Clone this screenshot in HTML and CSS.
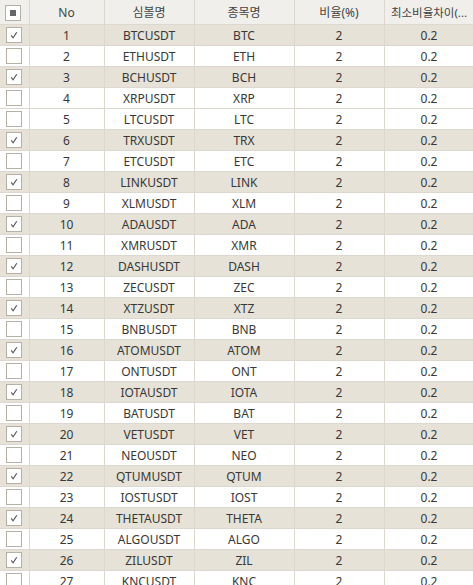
FILE: index.html
```html
<!DOCTYPE html>
<html lang="ko">
<head>
    <meta charset="UTF-8">
    <title>종목 목록</title>
    <link rel="stylesheet" href="styles.css">
</head>
<body>
<table class="grid">
    <colgroup>
        <col class="c-chk">
        <col class="c-no">
        <col class="c-sym">
        <col class="c-name">
        <col class="c-rate">
        <col class="c-min">
    </colgroup>
    <thead>
        <tr>
            <th><span class="box"><span class="mixed"></span></span></th>
            <th>No</th>
            <th>심볼명</th>
            <th>종목명</th>
            <th>비율(%)</th>
            <th class="clip">최소비율차이(...</th>
        </tr>
    </thead>
    <tbody>
        <tr class="on"><td><span class="box"><svg viewBox="0 0 15 15"><path d="M4.5 8 L6.5 10.5 L10.5 4.5"/></svg></span></td><td>1</td><td>BTCUSDT</td><td>BTC</td><td>2</td><td>0.2</td></tr>
        <tr><td><span class="box"></span></td><td>2</td><td>ETHUSDT</td><td>ETH</td><td>2</td><td>0.2</td></tr>
        <tr class="on"><td><span class="box"><svg viewBox="0 0 15 15"><path d="M4.5 8 L6.5 10.5 L10.5 4.5"/></svg></span></td><td>3</td><td>BCHUSDT</td><td>BCH</td><td>2</td><td>0.2</td></tr>
        <tr><td><span class="box"></span></td><td>4</td><td>XRPUSDT</td><td>XRP</td><td>2</td><td>0.2</td></tr>
        <tr><td><span class="box"></span></td><td>5</td><td>LTCUSDT</td><td>LTC</td><td>2</td><td>0.2</td></tr>
        <tr class="on"><td><span class="box"><svg viewBox="0 0 15 15"><path d="M4.5 8 L6.5 10.5 L10.5 4.5"/></svg></span></td><td>6</td><td>TRXUSDT</td><td>TRX</td><td>2</td><td>0.2</td></tr>
        <tr><td><span class="box"></span></td><td>7</td><td>ETCUSDT</td><td>ETC</td><td>2</td><td>0.2</td></tr>
        <tr class="on"><td><span class="box"><svg viewBox="0 0 15 15"><path d="M4.5 8 L6.5 10.5 L10.5 4.5"/></svg></span></td><td>8</td><td>LINKUSDT</td><td>LINK</td><td>2</td><td>0.2</td></tr>
        <tr><td><span class="box"></span></td><td>9</td><td>XLMUSDT</td><td>XLM</td><td>2</td><td>0.2</td></tr>
        <tr class="on"><td><span class="box"><svg viewBox="0 0 15 15"><path d="M4.5 8 L6.5 10.5 L10.5 4.5"/></svg></span></td><td>10</td><td>ADAUSDT</td><td>ADA</td><td>2</td><td>0.2</td></tr>
        <tr><td><span class="box"></span></td><td>11</td><td>XMRUSDT</td><td>XMR</td><td>2</td><td>0.2</td></tr>
        <tr class="on"><td><span class="box"><svg viewBox="0 0 15 15"><path d="M4.5 8 L6.5 10.5 L10.5 4.5"/></svg></span></td><td>12</td><td>DASHUSDT</td><td>DASH</td><td>2</td><td>0.2</td></tr>
        <tr><td><span class="box"></span></td><td>13</td><td>ZECUSDT</td><td>ZEC</td><td>2</td><td>0.2</td></tr>
        <tr class="on"><td><span class="box"><svg viewBox="0 0 15 15"><path d="M4.5 8 L6.5 10.5 L10.5 4.5"/></svg></span></td><td>14</td><td>XTZUSDT</td><td>XTZ</td><td>2</td><td>0.2</td></tr>
        <tr><td><span class="box"></span></td><td>15</td><td>BNBUSDT</td><td>BNB</td><td>2</td><td>0.2</td></tr>
        <tr class="on"><td><span class="box"><svg viewBox="0 0 15 15"><path d="M4.5 8 L6.5 10.5 L10.5 4.5"/></svg></span></td><td>16</td><td>ATOMUSDT</td><td>ATOM</td><td>2</td><td>0.2</td></tr>
        <tr><td><span class="box"></span></td><td>17</td><td>ONTUSDT</td><td>ONT</td><td>2</td><td>0.2</td></tr>
        <tr class="on"><td><span class="box"><svg viewBox="0 0 15 15"><path d="M4.5 8 L6.5 10.5 L10.5 4.5"/></svg></span></td><td>18</td><td>IOTAUSDT</td><td>IOTA</td><td>2</td><td>0.2</td></tr>
        <tr><td><span class="box"></span></td><td>19</td><td>BATUSDT</td><td>BAT</td><td>2</td><td>0.2</td></tr>
        <tr class="on"><td><span class="box"><svg viewBox="0 0 15 15"><path d="M4.5 8 L6.5 10.5 L10.5 4.5"/></svg></span></td><td>20</td><td>VETUSDT</td><td>VET</td><td>2</td><td>0.2</td></tr>
        <tr><td><span class="box"></span></td><td>21</td><td>NEOUSDT</td><td>NEO</td><td>2</td><td>0.2</td></tr>
        <tr class="on"><td><span class="box"><svg viewBox="0 0 15 15"><path d="M4.5 8 L6.5 10.5 L10.5 4.5"/></svg></span></td><td>22</td><td>QTUMUSDT</td><td>QTUM</td><td>2</td><td>0.2</td></tr>
        <tr><td><span class="box"></span></td><td>23</td><td>IOSTUSDT</td><td>IOST</td><td>2</td><td>0.2</td></tr>
        <tr class="on"><td><span class="box"><svg viewBox="0 0 15 15"><path d="M4.5 8 L6.5 10.5 L10.5 4.5"/></svg></span></td><td>24</td><td>THETAUSDT</td><td>THETA</td><td>2</td><td>0.2</td></tr>
        <tr><td><span class="box"></span></td><td>25</td><td>ALGOUSDT</td><td>ALGO</td><td>2</td><td>0.2</td></tr>
        <tr class="on"><td><span class="box"><svg viewBox="0 0 15 15"><path d="M4.5 8 L6.5 10.5 L10.5 4.5"/></svg></span></td><td>26</td><td>ZILUSDT</td><td>ZIL</td><td>2</td><td>0.2</td></tr>
        <tr><td><span class="box"></span></td><td>27</td><td>KNCUSDT</td><td>KNC</td><td>2</td><td>0.2</td></tr>
    </tbody>
</table>
</body>
</html>
```

FILE: styles.css
```css
html, body {
    margin: 0;
    padding: 0;
    background: #ffffff;
    overflow: hidden;
}
body {
    font-family: "Noto Sans", "Noto Sans CJK KR", sans-serif;
    font-size: 12px;
    color: #383838;
}
.grid {
    border-collapse: collapse;
    table-layout: fixed;
    width: 474px;
}
.c-chk { width: 29px; }
.c-no { width: 75px; }
.c-sym { width: 90px; }
.c-name { width: 100px; }
.c-rate { width: 90px; }
.c-min { width: 90px; }

.grid th, .grid td {
    border: 1px solid #dcd8cf;
    padding: 0;
    text-align: center;
    white-space: nowrap;
    overflow: hidden;
}
.grid tr > :first-child { border-left: none; }
.grid thead tr > th { border-top: none; }
.grid th {
    height: 24px;
    padding-top: 1px;
    box-sizing: border-box;
    background: #f0efeb;
    font-weight: normal;
    color: #444444;
}
.grid th.clip { font-size: 11.5px; }
.grid td {
    height: 20px;
    padding-top: 2px;
    line-height: 18px;
    box-sizing: border-box;
}
.grid td:first-child { padding-top: 0; }
.grid tr.on td { background: #e6e2d7; }

.box {
    display: block;
    width: 14px;
    height: 14px;
    margin-left: 6px;
    border: 1px solid #b7b0a4;
    background: #ffffff;
}
th .box { margin-left: 5px; margin-top: 1px; }
.box svg {
    display: block;
    width: 14px;
    height: 14px;
}
.box path {
    fill: none;
    stroke: #555555;
    stroke-width: 1.2;
}
.mixed {
    display: block;
    width: 6px;
    height: 6px;
    margin: 4px;
    background: #666666;
}
```
